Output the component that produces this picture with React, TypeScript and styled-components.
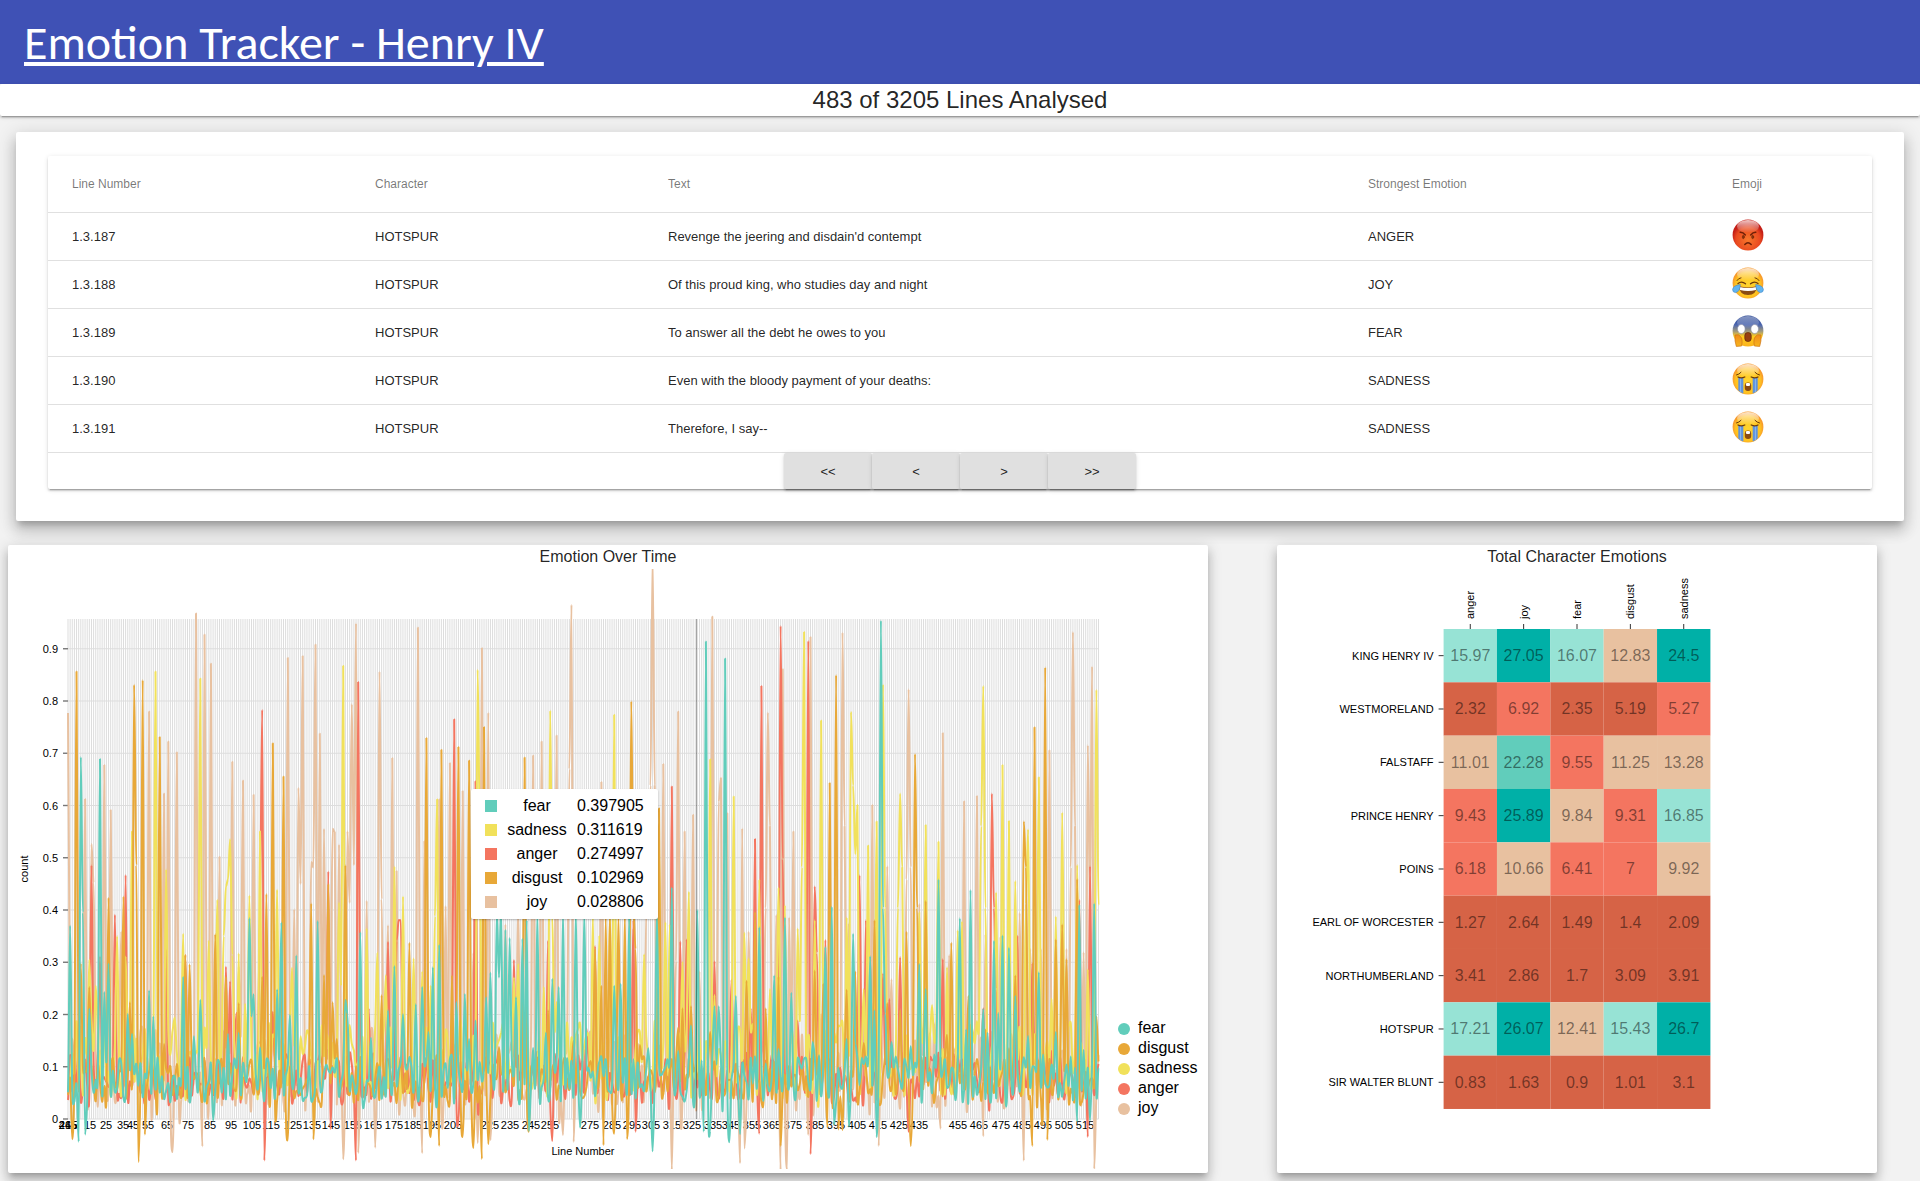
import React from "react";
import styled, { createGlobalStyle } from "styled-components";

const GlobalStyle = createGlobalStyle`
  * { box-sizing: border-box; }
  body {
    margin: 0;
    background: #f2f2f2;
    color: rgba(0, 0, 0, 0.87);
    font-family: Arial, "Liberation Sans", sans-serif;
    overflow: hidden;
  }
`;

const Z2 = "0 3px 1px -2px rgba(0,0,0,.2), 0 2px 2px 0 rgba(0,0,0,.14), 0 1px 5px 0 rgba(0,0,0,.12)";
const Z8 = "0 5px 5px -3px rgba(0,0,0,.2), 0 8px 10px 1px rgba(0,0,0,.14), 0 3px 14px 2px rgba(0,0,0,.12)";
const Z10 = "0 6px 6px -3px rgba(0,0,0,.2), 0 10px 14px 1px rgba(0,0,0,.14), 0 4px 18px 3px rgba(0,0,0,.12)";

const Page = styled.div`
  display: flex;
  flex-direction: column;
  height: 1181px;
  overflow: hidden;
`;

const Toolbar = styled.header`
  display: flex;
  align-items: center;
  flex: none;
  height: 84px;
  padding: 1px 24px 0;
  background: #3f51b5;
  color: #fff;
`;

const Brand = styled.h1`
  margin: 0;
  font: 400 48px/60px Calibri, Carlito, Lato, sans-serif;
  text-decoration: underline;
  text-decoration-thickness: 4px;
  text-underline-offset: 3px;
  white-space: nowrap;
`;

const StatusBar = styled.div`
  flex: none;
  height: 32px;
  border-radius: 2px;
  background: #fff;
  box-shadow: ${Z2};
  font-size: 24px;
  line-height: 32px;
  text-align: center;
`;

const TableCard = styled.section`
  flex: none;
  height: 389px;
  margin: 16px 16px 0;
  padding: 24px 32px 0;
  border-radius: 2px;
  background: #fff;
  box-shadow: ${Z10};
`;

const TableFrame = styled.div`
  border-radius: 2px;
  box-shadow: ${Z2};
`;

const Row = styled.div<{ $head?: boolean }>`
  display: grid;
  grid-template-columns: 303px 293px 700px 364px 1fr;
  align-items: center;
  height: ${(p) => (p.$head ? 57 : 48)}px;
  border-bottom: 1px solid #e0e0e0;
  color: ${(p) => (p.$head ? "rgba(0,0,0,.54)" : "rgba(0,0,0,.87)")};
  font-size: ${(p) => (p.$head ? 12 : 13)}px;
`;

const Cell = styled.div`
  padding-left: 24px;
  white-space: nowrap;
`;

const EmojiSvg = styled.svg`
  display: block;
  width: 32px;
  height: 32px;
  margin-top: -3px;
`;

const Pager = styled.div`
  display: flex;
  justify-content: center;
  height: 36px;
`;

const PagerButton = styled.button`
  width: 88px;
  height: 36px;
  padding: 0;
  border: 0;
  border-radius: 2px;
  background: #e0e0e0;
  box-shadow: ${Z2};
  color: rgba(0, 0, 0, 0.87);
  font: 13px Arial, "Liberation Sans", sans-serif;
`;

const ChartRow = styled.main`
  display: flex;
  flex: none;
  gap: 69px;
  margin-top: 24px;
  padding-left: 8px;
`;

const ChartCard = styled.section<{ $width: number }>`
  position: relative;
  width: ${(p) => p.$width}px;
  height: 628px;
  border-radius: 2px;
  background: #fff;
  box-shadow: ${Z8};
`;

const ChartTitle = styled.h2`
  height: 24px;
  margin: 0;
  font-size: 16px;
  font-weight: 400;
  line-height: 23px;
  text-align: center;
`;

const ChartSvg = styled.svg`
  display: block;
  width: 100%;
  height: 600px;
  font-family: Arial, "Liberation Sans", sans-serif;
`;

const Tooltip = styled.div`
  position: absolute;
  left: 463px;
  top: 244px;
  width: 187px;
  height: 130px;
  padding: 5px 14px;
  border-radius: 2px;
  background: #fff;
  box-shadow: 0 1px 2px rgba(0, 0, 0, 0.25);
  color: #000;
  font-size: 16px;
`;

const TooltipRow = styled.div`
  display: grid;
  grid-template-columns: 12px 80px 66px;
  align-items: center;
  height: 24px;
`;

const Swatch = styled.span<{ $color: string }>`
  width: 12px;
  height: 12px;
  background: ${(p) => p.$color};
`;

const TooltipName = styled.span`
  text-align: center;
`;

const COLORS: Record<string, string> = {
  fear: "#61cdbb",
  disgust: "#e8a838",
  sadness: "#f1e15b",
  anger: "#f47560",
  joy: "#e8c1a0",
};

type Mood = "ANGER" | "JOY" | "FEAR" | "SADNESS";

const LINES: [string, string, Mood][] = [
  ["1.3.187", "Revenge the jeering and disdain'd contempt", "ANGER"],
  ["1.3.188", "Of this proud king, who studies day and night", "JOY"],
  ["1.3.189", "To answer all the debt he owes to you", "FEAR"],
  ["1.3.190", "Even with the bloody payment of your deaths:", "SADNESS"],
  ["1.3.191", "Therefore, I say--", "SADNESS"],
];

function EmojiDefs() {
  return (
    <svg width="0" height="0" style={{ position: "absolute" }}>
      <defs>
        <radialGradient id="gold" cx=".5" cy=".55" r=".5">
          <stop offset="0" stopColor="#ffd52e" />
          <stop offset=".8" stopColor="#ffc21f" />
          <stop offset="1" stopColor="#f79a2c" />
        </radialGradient>
        <radialGradient id="rage" cx=".5" cy=".65" r=".52">
          <stop offset="0" stopColor="#f7782c" />
          <stop offset=".75" stopColor="#ea4a20" />
          <stop offset="1" stopColor="#c41f17" />
        </radialGradient>
        <linearGradient id="scare" x1="0" y1="0" x2="0" y2="1">
          <stop offset="0" stopColor="#22408f" />
          <stop offset=".3" stopColor="#4d67b0" />
          <stop offset=".52" stopColor="#a59c78" />
          <stop offset=".68" stopColor="#ffcb1d" />
          <stop offset="1" stopColor="#fbb31c" />
        </linearGradient>
        <linearGradient id="gloss" x1="0" y1="0" x2="0" y2="1">
          <stop offset="0" stopColor="#fff" stopOpacity=".75" />
          <stop offset="1" stopColor="#fff" stopOpacity="0" />
        </linearGradient>
        <linearGradient id="hand" x1="0" y1="0" x2="0" y2="1">
          <stop offset="0" stopColor="#f08a1d" />
          <stop offset="1" stopColor="#f7b51d" />
        </linearGradient>
      </defs>
    </svg>
  );
}

const BROWN = "#6b3a0c";

function Emoji({ mood }: { mood: Mood }) {
  const face = mood === "ANGER" ? "url(#rage)" : mood === "FEAR" ? "url(#scare)" : "url(#gold)";
  return (
    <EmojiSvg viewBox="0 0 32 32">
      <circle cx="16" cy="16" r="15.4" fill={face} />
      <ellipse cx="16" cy="7.4" rx="11" ry="6.4" fill="url(#gloss)" opacity={mood === "FEAR" ? 0.6 : 1} />
      {mood === "ANGER" && (
        <g fill="none" stroke="#6f2008" strokeWidth="1.5" strokeLinecap="round">
          <path d="M8.2 13.3 Q11 13.2 13.3 16M23.8 13.3 Q21 13.2 18.7 16" />
          <ellipse cx="11.3" cy="18" rx="1" ry="1.7" fill="#8a3c0c" strokeWidth=".6" />
          <ellipse cx="20.7" cy="18" rx="1" ry="1.7" fill="#8a3c0c" strokeWidth=".6" />
          <path d="M12.8 25.5 Q16 22 19.2 25.5" />
        </g>
      )}
      {mood === "JOY" && (
        <g>
          <path d="M7 19.3 Q16 21.5 25 19.3 Q24.5 28 16 28 Q7.5 28 7 19.3Z" fill="#8a4b12" />
          <path d="M7.4 20 Q16 22 24.6 20 L23.9 23 Q16 25 8.1 23Z" fill="#fff" />
          <g fill="none" stroke={BROWN} strokeWidth="1.3" strokeLinecap="round">
            <path d="M6 16.6 Q9.5 13.5 13.5 16.8M18.5 16.8 Q22.5 13.5 26 16.6" />
            <path d="M5 13.5 Q6.5 11 9 10.8M27 13.5 Q25.5 11 23 10.8" strokeWidth="1" />
          </g>
          <path d="M8.3 17.5 Q1 18.5 .6 22.5 Q.6 25.5 3.6 25.6 Q8 25 8.3 17.5Z" fill="#62b4ee" stroke="#3a85cc" strokeWidth=".6" />
          <path d="M23.7 17.5 Q31 18.5 31.4 22.5 Q31.4 25.5 28.4 25.6 Q24 25 23.7 17.5Z" fill="#62b4ee" stroke="#3a85cc" strokeWidth=".6" />
        </g>
      )}
      {mood === "FEAR" && (
        <g>
          <ellipse cx="9.3" cy="14" rx="3.8" ry="4.5" fill="#fff" stroke="#8b8fa5" strokeWidth=".6" />
          <ellipse cx="22.7" cy="14" rx="3.8" ry="4.5" fill="#fff" stroke="#8b8fa5" strokeWidth=".6" />
          <rect x="12.8" y="17.5" width="6.4" height="9" rx="3" fill="#973f10" stroke="#5e250a" strokeWidth=".7" />
          <path d="M3 20 Q7 18.8 8.5 21.5 Q11 24 9.6 31 L4.3 31.4 Q2.5 26 3 20Z" fill="url(#hand)" stroke="#cd7414" strokeWidth=".7" />
          <path d="M29 20 Q25 18.8 23.5 21.5 Q21 24 22.4 31 L27.7 31.4 Q29.5 26 29 20Z" fill="url(#hand)" stroke="#cd7414" strokeWidth=".7" />
        </g>
      )}
      {mood === "SADNESS" && (
        <g>
          <path d="M6.3 15 H11.3 V30.6 Q8.3 29.5 6.3 27.5ZM20.7 15 H25.7 V27.5 Q23.7 29.5 20.7 30.6Z" fill="#5f93dc" />
          <path d="M8.6 15 V29M23.4 15 V29" stroke="#8ab8ee" strokeWidth="1" />
          <rect x="12.8" y="19.5" width="6.4" height="8.5" rx="3" fill="#8a4b12" />
          <rect x="13.9" y="20" width="4.2" height="3" rx="1.2" fill="#fff" />
          <g fill="none" stroke={BROWN} strokeWidth="1.3" strokeLinecap="round">
            <path d="M6 14 Q9 15.6 12.8 14M19.2 14 Q23 15.6 26 14" />
            <path d="M4.5 12 Q7 11.5 9 9.3M27.5 12 Q25 11.5 23 9.3" strokeWidth="1" />
          </g>
        </g>
      )}
    </EmojiSvg>
  );
}

/* Plot geometry, in svg units. */
const PLOT = { left: 60, right: 1090.5, top: 50, bottom: 550 };
const UNIT = 522.5;
const COUNT = 484;
const STEP = (PLOT.right - PLOT.left) / (COUNT - 1);

/* Three consecutive stretches of the series; every pair is a sample "x,level". */
const STRETCHES = [
  { shift: -8, zero: 1437, scale: 1105.6 },
  { shift: 392, zero: 1416, scale: 1278 },
  { shift: 792, zero: 1416, scale: 1278 },
];

const SAMPLES: Record<string, string[]> = {
  joy: [
    "204,578 255,760 275,855 281,937 311,688 332,783 363,1040 449,575 489,748 506,638 528,661 588,367 616,412 636,473 660,882 699,681 731,721 759,751 713,1115 865,461 882,993 897,736 903,940 909,457 932,893 938,905 945,433 959,621 973,823 995,823 1001,642 1007,830 1020,856 1042,828 1048,980 1054,559 1060,900 1066,388 1098,975 1137,490 1142,1070 1148,972 1162,1027 1174,673 1190,912 517,1507 607,1495 1032,1522 1075,1509 1127,1498",
    "56,214 75,735 120,634 136,895 147,545 191,614 245,264 266,422 218,1010 400,527 426,493 471,478 507,560 513,158 519,620 357,900 603,592 752,600 758,40 764,600 788,548 825,346 831,1030 837,419 852,713 882,672 900,1055 939,187 957,640 963,582 984,668 1028,705 1047,958 1099,900 1105,422 1111,700 1128,917 1149,315 1180,713 1167,923 745,900 739,910 697,950 318,940 66,1500 232,1475 274,1468 492,1455 524,1472 815,1540 1019,1524 1036,1488 1139,1540 1158,1540",
    "32,237 129,226 135,700 63,1160 145,938 214,648 229,790 260,798 275,1074 317,690 322,830 329,365 335,800 355,890 400,1182 431,472 450,1015 482,1090 495,639 533,626 559,964 600,970 658,912 678,890 693,1000 747,514 798,1000 811,800 817,225 823,700 849,1008 862,502 869,900 876,309 725,1000 22,1455 237,1482 421,1440 548,1458 669,1518 885,1538",
  ],
  anger: [
    "272,900 375,921 344,1005 298,1093 497,1079 676,1115 690,1146 788,571 782,1000 984,913 1074,512 1162,1062 1190,1060 1199,1016 707,1212 819,1210 1107,1203 556,1090 796,1525 1065,1525 994,1458",
    "3,930 165,438 228,590 343,1027 585,993 813,603 844,982 860,977 946,1030 995,1075 1066,731 1085,357 1142,210 1148,780 1192,1175 560,1195 700,930 443,980 1050,1145 176,1425 455,1470 707,1447 1075,1452",
    "25,246 31,700 43,847 50,1010 77,978 177,820 195,930 212,1025 303,1020 266,1123 427,1025 577,620 583,900 654,968 696,1035 838,880 869,798 588,1098 250,1060 550,1145 33,1502 326,1447 861,1460",
  ],
  sadness: [
    "271,774 265,1100 288,1155 350,1050 376,1093 393,828 464,490 498,909 521,1222 550,1045 603,505 627,1060 655,973 672,1050 679,945 685,930 690,845 696,1090 718,1087 737,1193 750,964 782,828 833,952 877,1117 1029,478 1017,979 1023,1155 1100,1034 1130,1085 1156,1133 1183,903 902,1262 1048,1238",
    "12,872 39,1023 67,1055 109,634 103,920 235,317 241,700 343,1070 355,1037 431,1093 450,417 456,920 467,1130 642,427 507,1297 576,920 597,967 632,910 729,1013 780,740 799,935 806,940 845,1032 869,860 932,536 946,1113 1003,627 1032,960 1047,1023 1078,830 1111,1098 1135,850 1157,893 1195,950 901,1213 90,1090",
    "12,225 6,800 42,930 63,441 79,1200 118,1190 138,923 156,420 162,600 166,768 174,648 203,747 233,688 248,353 254,900 293,900 299,620 305,800 361,910 380,697 394,1137 404,1230 418,738 444,1045 474,955 489,933 548,357 542,700 554,900 532,1176 589,862 609,550 627,687 646,834 678,890 685,708 716,580 753,1122 768,921 787,666 807,1190 831,795 865,1050 889,366 895,893 193,1098",
  ],
  disgust: [
    "229,490 243,1108 265,1158 324,969 368,966 388,1190 401,518 408,900 426,508 477,629 490,1278 572,1110 643,1046 680,1136 718,1192 801,961 820,642 852,712 786,1136 933,981 971,1132 984,940 998,1190 1035,900 1143,1175 1009,1268 553,1090 220,1480 417,1528 435,1470 861,1482 943,1480",
    "31,985 82,484 127,513 153,1065 178,506 210,539 254,457 375,532 348,1175 300,1240 445,1150 692,394 698,900 603,1090 620,920 655,920 672,920 776,656 585,1000 832,1193 845,1145 871,1140 932,1203 1041,1078 1066,910 1097,1145 1135,1068 704,1000 630,915 523,1225 722,1235 92,1460 119,1482 187,1460 217,1487 245,1514 263,1477 386,1447 612,1480 645,1452 681,1465 1145,1482",
    "44,1053 69,1085 88,594 107,330 139,1100 166,1055 192,1230 222,930 262,1133 300,1150 322,958 343,523 349,900 374,883 456,985 438,1210 503,1115 558,1197 647,1065 670,688 676,800 704,458 735,311 741,900 768,977 786,940 800,1025 831,829 551,1325 890,1165 627,1243 80,1437 116,1442 128,1443 331,1482 694,1482 743,1467",
  ],
  fear: [
    "209,1028 243,671 249,1000 268,1203 300,675 313,1168 325,1108 381,1215 395,1257 445,1165 463,1220 547,1136 580,1262 603,1185 686,1257 718,1255 750,1012 756,1220 762,1173 780,1286 830,1163 846,1021 870,1217 889,1091 953,1018 1035,1185 1041,1215 1080,1042 1116,1265 1162,1207 1182,1113 233,1485 258,1470 639,1440",
    "12,1160 50,1135 67,1093 88,1203 101,1045 115,990 153,1258 170,1130 196,1110 208,1220 228,1175 260,1118 274,1058 293,910 299,1070 303,900 318,953 330,973 346,1118 367,975 380,930 412,910 397,1242 437,1205 457,1073 476,1093 492,910 525,910 551,910 596,1275 578,1300 641,1090 661,1085 685,925 703,1270 743,1243 770,910 800,1270 818,850 832,1250 870,1187 889,905 905,1273 920,248 945,1140 959,1140 977,290 1008,1115 1041,1325 1060,1330 1078,947 1097,1280 1123,1065 1135,1245 1155,923 1174,1107 388,1445 537,1437 758,1495 911,1447 933,1445 986,1473 1017,1453",
    "15,1268 39,1228 54,1260 74,995 94,897 115,1290 139,1220 158,963 168,1232 183,1267 195,1263 209,1018 223,1150 240,197 246,900 253,1158 272,1228 289,1263 310,1268 361,1037 335,1238 347,1278 380,1098 418,830 403,1258 450,1335 482,925 500,1197 513,856 550,1147 565,1205 583,980 596,1157 609,967 627,997 646,1115 670,1265 685,1213 697,1287 716,1057 730,1258 765,1203 799,1283 810,1263 824,1290 837,892 851,1247 869,1340 882,889 895,1290 103,1430 148,1435 231,1460 829,1422 873,1420",
  ],
};

const AMBIENT: Record<string, [number, number]> = {
  joy: [0.02, 0.17],
  anger: [0.03, 0.13],
  sadness: [0.04, 0.19],
  disgust: [0.03, 0.12],
  fear: [0.03, 0.12],
};

function seeded(seed: number) {
  let s = seed;
  return () => {
    s = (s * 16807) % 2147483647;
    return s / 2147483647;
  };
}

function seriesPath(id: string, seed: number) {
  const random = seeded(seed);
  const [low, high] = AMBIENT[id];
  const values = Array.from({ length: COUNT }, () => low + random() * (high - low));
  const sampled = new Set<number>();
  STRETCHES.forEach(({ shift, zero, scale }, part) => {
    SAMPLES[id][part].split(" ").forEach((pair) => {
      const [px, level] = pair.split(",").map(Number);
      const index = Math.round((px / 3 + shift - PLOT.left) / STEP);
      if (index >= 0 && index < COUNT) {
        values[index] = (zero - level) / scale;
        sampled.add(index);
      }
    });
  });
  const ys = values.map((v) => PLOT.bottom - v * UNIT);
  /* The curve is level at every sample and eased between ambient points. */
  const slope = ys.map((_, i) =>
    sampled.has(i) ? 0 : ((ys[Math.min(COUNT - 1, i + 1)] - ys[Math.max(0, i - 1)]) / 6) * 0.7,
  );
  let d = `M${PLOT.left},${ys[0].toFixed(1)}`;
  for (let i = 0; i < COUNT - 1; i++) {
    const x = PLOT.left + i * STEP;
    const c = [x + STEP / 3, ys[i] + slope[i], x + (STEP * 2) / 3, ys[i + 1] - slope[i + 1], x + STEP, ys[i + 1]];
    d += `C${c.map((n) => n.toFixed(1)).join(",")}`;
  }
  return d;
}

const X_TICKS: [string, number][] = (
  "215,68 265,68 445,68 5,75 15,90 25,106 35,123 45,133 55,148 65,167 75,188 85,210 95,231 105,252 115,271 125,293 135,312 145,331 155,353 165,373 175,394 185,413 195,432 205,453 225,490 235,510 245,531 255,550 275,590 285,612 295,632 305,651 315,672 325,692 335,713 345,731 355,752 365,772 375,793 385,815 395,836 405,857 415,878 425,899 435,919 455,958 465,979 475,1001 485,1022 495,1043 505,1064 515,1085"
)
  .split(" ")
  .map((t) => {
    const [label, x] = t.split(",");
    return [label, Number(x) - 8];
  });

function EmotionChart() {
  const levels = [0, 0.1, 0.2, 0.3, 0.4, 0.5, 0.6, 0.7, 0.8, 0.9];
  return (
    <ChartSvg viewBox="0 0 1200 600">
      <g stroke="#ddd">
        {Array.from({ length: COUNT }, (_, i) => (
          <line key={i} x1={PLOT.left + i * STEP} x2={PLOT.left + i * STEP} y1={PLOT.top} y2={PLOT.bottom} />
        ))}
        {levels.map((v) => (
          <line key={v} x1={PLOT.left} x2={PLOT.right} y1={PLOT.bottom - v * UNIT} y2={PLOT.bottom - v * UNIT} />
        ))}
      </g>
      <g fontSize="11" fill="#000">
        {levels.map((v) => (
          <g key={v}>
            <line x1="55" x2="60" y1={PLOT.bottom - v * UNIT} y2={PLOT.bottom - v * UNIT} stroke="#777" strokeWidth="1.4" />
            <text x="50" y={PLOT.bottom - v * UNIT + 4} textAnchor="end">
              {v}
            </text>
          </g>
        ))}
        {X_TICKS.map(([label, x]) => (
          <text key={label} x={x} y="560" textAnchor="middle">
            {label}
          </text>
        ))}
        <text x="575" y="586" textAnchor="middle">
          Line Number
        </text>
        <text transform="translate(20 300) rotate(-90)" textAnchor="middle">
          count
        </text>
      </g>
      <g fill="none" strokeWidth="2" strokeLinejoin="bevel">
        {["joy", "anger", "sadness", "disgust", "fear"].map((id, i) => (
          <path key={id} d={seriesPath(id, 917 + i * 7331)} stroke={COLORS[id]} />
        ))}
      </g>
      <line x1="688.5" x2="688.5" y1={PLOT.top} y2={PLOT.bottom} stroke="#000" strokeOpacity=".35" />
      <g fontSize="16" fill="#000">
        {Object.keys(COLORS).map((id, i) => (
          <g key={id}>
            <circle cx="1116" cy={460 + i * 20} r="6" fill={COLORS[id]} />
            <text x="1130" y={464 + i * 20}>
              {id}
            </text>
          </g>
        ))}
      </g>
    </ChartSvg>
  );
}

const EMOTIONS = ["anger", "joy", "fear", "disgust", "sadness"];
const TOTALS: [string, number[]][] = [
  ["KING HENRY IV", [15.97, 27.05, 16.07, 12.83, 24.5]],
  ["WESTMORELAND", [2.32, 6.92, 2.35, 5.19, 5.27]],
  ["FALSTAFF", [11.01, 22.28, 9.55, 11.25, 13.28]],
  ["PRINCE HENRY", [9.43, 25.89, 9.84, 9.31, 16.85]],
  ["POINS", [6.18, 10.66, 6.41, 7, 9.92]],
  ["EARL OF WORCESTER", [1.27, 2.64, 1.49, 1.4, 2.09]],
  ["NORTHUMBERLAND", [3.41, 2.86, 1.7, 3.09, 3.91]],
  ["HOTSPUR", [17.21, 26.07, 12.41, 15.43, 26.7]],
  ["SIR WALTER BLUNT", [0.83, 1.63, 0.9, 1.01, 3.1]],
];

function heatColor(v: number) {
  if (v < 5.2) return "#d66346";
  if (v < 9.6) return "#f47560";
  if (v < 14) return "#e8c1a0";
  if (v < 18.5) return "#97e3d5";
  if (v < 23) return "#61cdbb";
  return "#00b0a7";
}

function HeatMap() {
  const left = 166.6;
  const top = 60;
  const w = 53.36;
  const h = 53.33;
  return (
    <ChartSvg viewBox="0 0 600 600">
      {TOTALS.map(([name, values], r) => (
        <g key={name}>
          {values.map((v, c) => (
            <g key={c}>
              <rect x={left + c * w} y={top + r * h} width={w} height={h} fill={heatColor(v)} />
              <text x={left + (c + 0.5) * w} y={top + (r + 0.5) * h + 5.5} fontSize="16" fill="#000" fillOpacity=".48" textAnchor="middle">
                {v}
              </text>
            </g>
          ))}
          <line x1={left - 5} x2={left} y1={top + (r + 0.5) * h} y2={top + (r + 0.5) * h} stroke="#333" />
          <text x={left - 10} y={top + (r + 0.5) * h + 4} fontSize="11" textAnchor="end">
            {name}
          </text>
        </g>
      ))}
      {EMOTIONS.map((name, c) => (
        <g key={name}>
          <line x1={left + (c + 0.5) * w} x2={left + (c + 0.5) * w} y1={top - 5} y2={top} stroke="#333" />
          <text transform={`translate(${left + (c + 0.5) * w + 4} ${top - 10}) rotate(-90)`} fontSize="11">
            {name}
          </text>
        </g>
      ))}
    </ChartSvg>
  );
}

const HOVERED = [
  ["fear", "0.397905"],
  ["sadness", "0.311619"],
  ["anger", "0.274997"],
  ["disgust", "0.102969"],
  ["joy", "0.028806"],
];

export default function App() {
  return (
    <Page>
      <GlobalStyle />
      <EmojiDefs />
      <Toolbar>
        <Brand>Emotion Tracker - Henry IV</Brand>
      </Toolbar>
      <StatusBar>483 of 3205 Lines Analysed</StatusBar>
      <TableCard>
        <TableFrame>
          <Row $head>
            {["Line Number", "Character", "Text", "Strongest Emotion", "Emoji"].map((h) => (
              <Cell key={h}>{h}</Cell>
            ))}
          </Row>
          {LINES.map(([line, text, mood]) => (
            <Row key={line}>
              <Cell>{line}</Cell>
              <Cell>HOTSPUR</Cell>
              <Cell>{text}</Cell>
              <Cell>{mood}</Cell>
              <Cell>
                <Emoji mood={mood} />
              </Cell>
            </Row>
          ))}
          <Pager>
            {["<<", "<", ">", ">>"].map((label) => (
              <PagerButton key={label}>{label}</PagerButton>
            ))}
          </Pager>
        </TableFrame>
      </TableCard>
      <ChartRow>
        <ChartCard $width={1200}>
          <ChartTitle>Emotion Over Time</ChartTitle>
          <EmotionChart />
          <Tooltip>
            {HOVERED.map(([id, value]) => (
              <TooltipRow key={id}>
                <Swatch $color={COLORS[id]} />
                <TooltipName>{id}</TooltipName>
                <span>{value}</span>
              </TooltipRow>
            ))}
          </Tooltip>
        </ChartCard>
        <ChartCard $width={600}>
          <ChartTitle>Total Character Emotions</ChartTitle>
          <HeatMap />
        </ChartCard>
      </ChartRow>
    </Page>
  );
}
